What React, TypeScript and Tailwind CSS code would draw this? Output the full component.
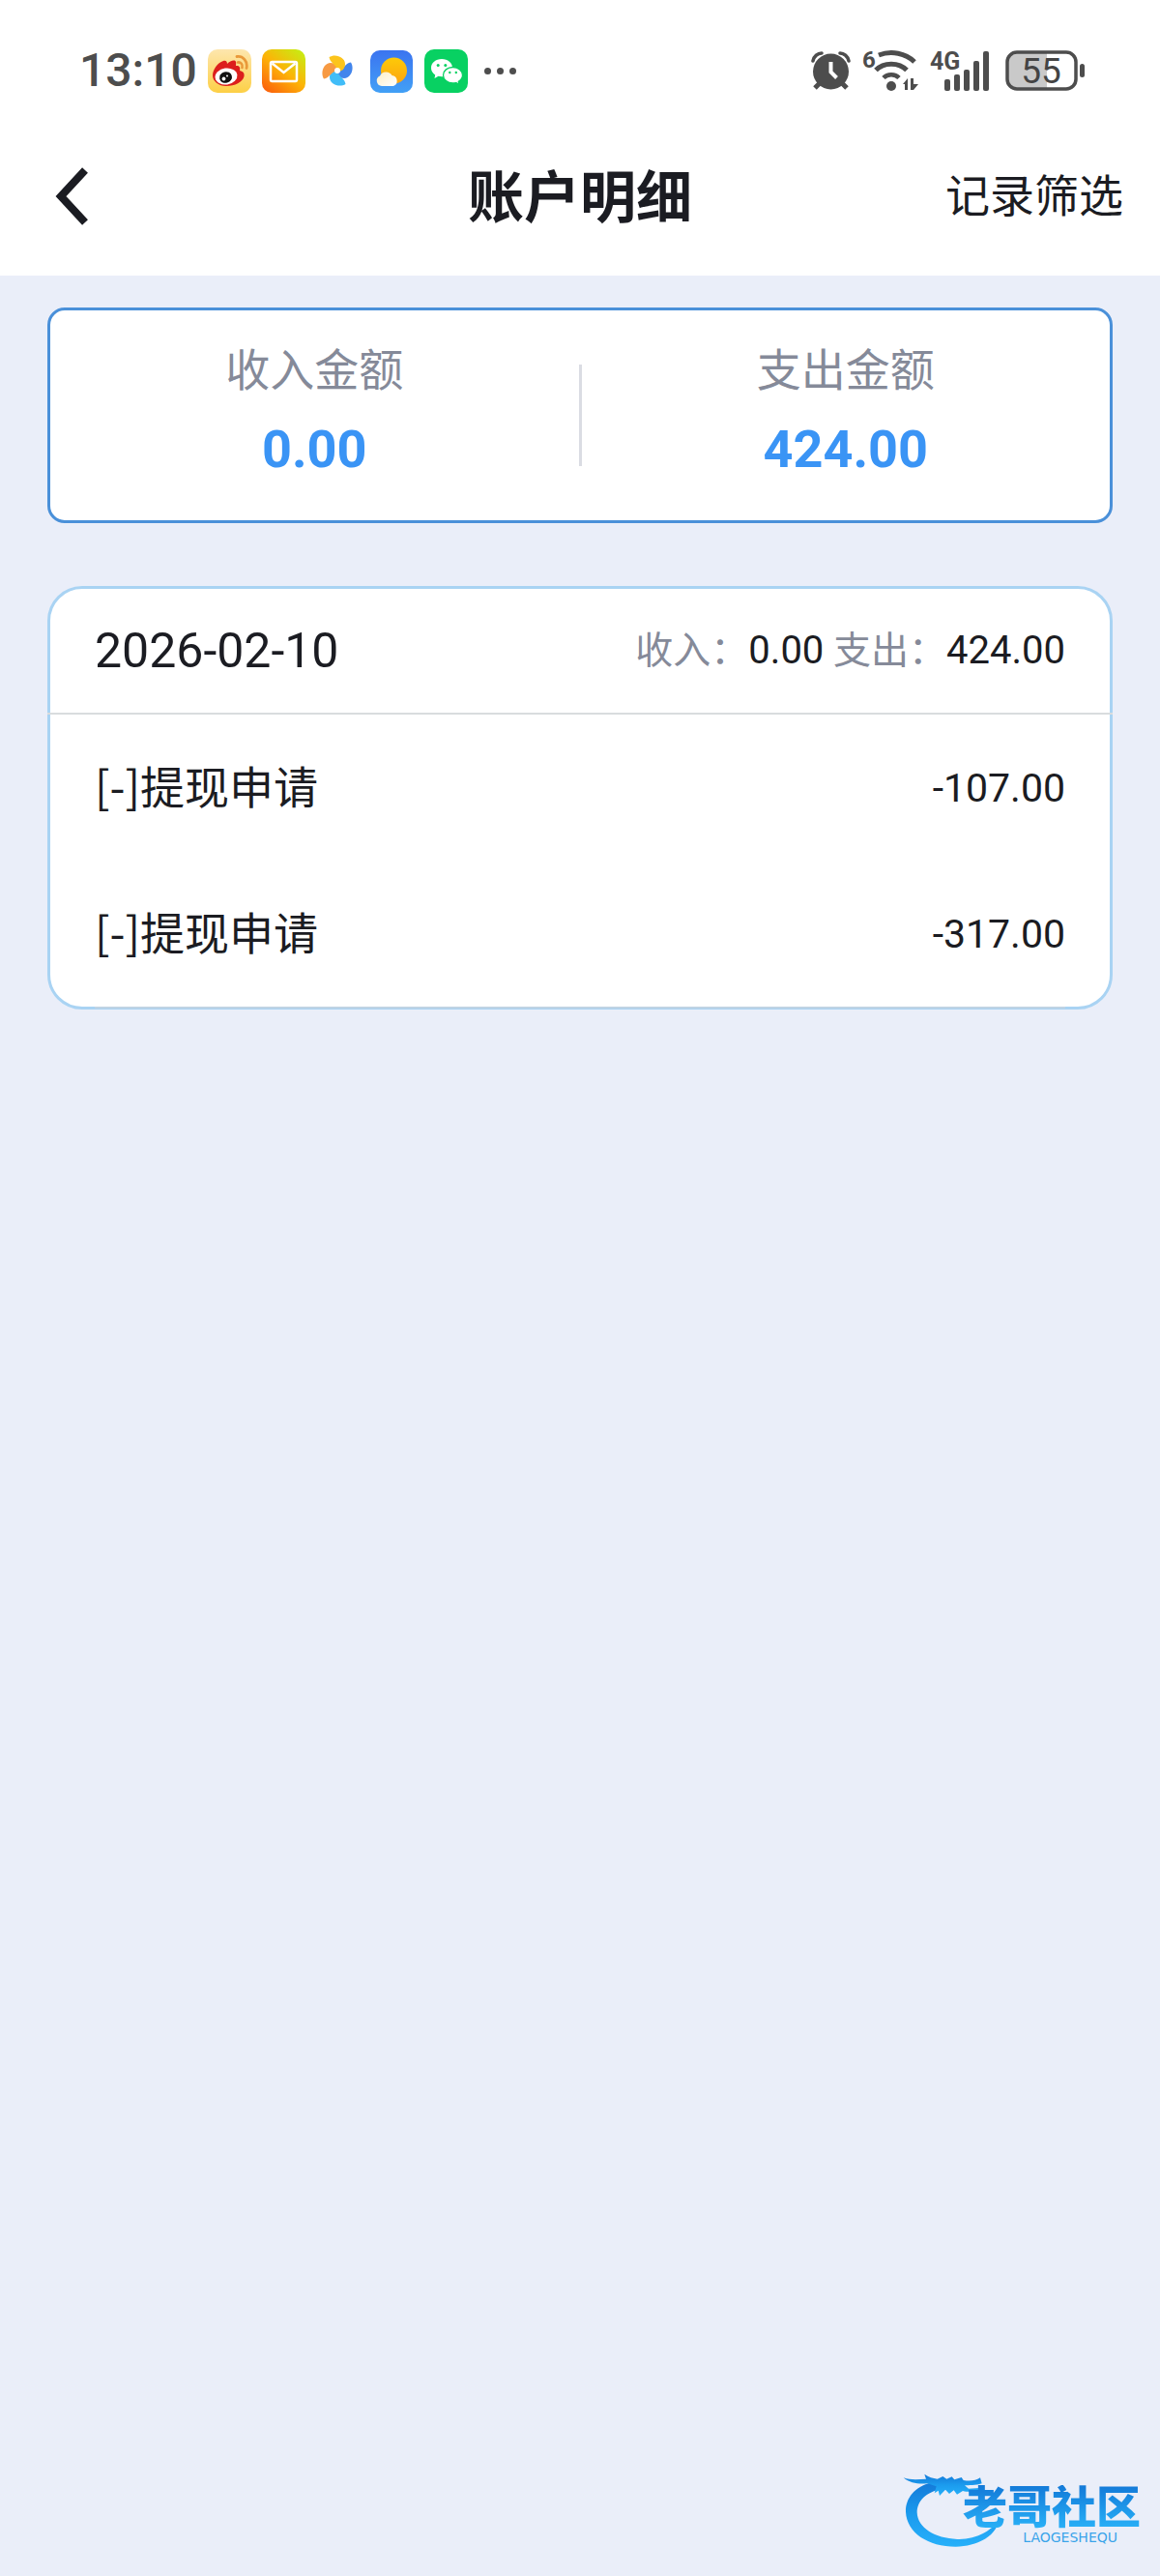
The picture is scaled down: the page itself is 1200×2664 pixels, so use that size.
import React from 'react';

interface RecordItem {
  id: number;
  title: string;
  amount: string;
}

const records: RecordItem[] = [
  { id: 1, title: '[-]提现申请', amount: '-107.00' },
  { id: 2, title: '[-]提现申请', amount: '-317.00' },
];

const WeiboIcon = () => (
  <svg width="45" height="45" viewBox="0 0 45 45" aria-hidden="true">
    <defs>
      <linearGradient id="weibo" x1="0" y1="0" x2="0" y2="1">
        <stop offset="0" stopColor="#fde6ae" />
        <stop offset="1" stopColor="#fdd046" />
      </linearGradient>
    </defs>
    <rect width="45" height="45" rx="10" fill="url(#weibo)" />
    <path d="M5 27C5 21 10 14 16 12c3-1 4 1 4 3 3-3 8-5 9-2 .4 1.5 0 3 0 4 3-.5 5 1 4 5 4 1 5 3 4.5 6C36 34 28 38 19 38 11 38 5 33 5 27z" fill="#dc1f1d" />
    <ellipse cx="19" cy="28" rx="11.5" ry="8.5" fill="#fff" transform="rotate(-8 19 28)" />
    <ellipse cx="18.5" cy="29" rx="6.5" ry="5.8" fill="#111" transform="rotate(-15 18.5 29)" />
    <circle cx="16.5" cy="30.5" r="1.9" fill="#fff" />
    <circle cx="20" cy="27.5" r="1" fill="#fff" />
    <path d="M30 7.5c6-1 11.5 4.5 10 12" fill="none" stroke="#e9993a" strokeWidth="2.8" strokeLinecap="round" />
    <path d="M31 13.5c3-.5 5.5 2 4.5 5.5" fill="none" stroke="#e9993a" strokeWidth="2.6" strokeLinecap="round" />
  </svg>
);

const MailIcon = () => (
  <svg width="45" height="45" viewBox="0 0 45 45" aria-hidden="true">
    <defs>
      <linearGradient id="mail" x1="0.1" y1="1" x2="0.9" y2="0">
        <stop offset="0" stopColor="#fb5f0c" />
        <stop offset="0.5" stopColor="#fdb307" />
        <stop offset="1" stopColor="#c6ee14" />
      </linearGradient>
    </defs>
    <rect width="45" height="45" rx="10" fill="url(#mail)" />
    <rect x="9" y="13" width="27" height="20" rx="1.5" fill="none" stroke="#fff" strokeWidth="2.5" />
    <path d="M10.5 14.5L22.5 24l12-9.5" fill="none" stroke="#fff" strokeWidth="2.5" />
  </svg>
);

const PinwheelIcon = () => (
  <svg width="34" height="34" viewBox="-17 -17 34 34" aria-hidden="true">
    <path d="M-1 0C6 0 8-8 14-8.5C18-2 14 8 7 8C2 8-1 5-1 0Z" fill="#4285ec" />
    <path d="M-1 0C6 0 8-8 14-8.5C18-2 14 8 7 8C2 8-1 5-1 0Z" fill="#41bdf8" transform="rotate(90)" />
    <path d="M-1 0C6 0 8-8 14-8.5C18-2 14 8 7 8C2 8-1 5-1 0Z" fill="#f79a43" transform="rotate(180)" />
    <path d="M-1 0C6 0 8-8 14-8.5C18-2 14 8 7 8C2 8-1 5-1 0Z" fill="#fcc41c" transform="rotate(270)" />
    <circle r="3" fill="#fff" />
  </svg>
);

const WeatherIcon = () => (
  <svg width="45" height="45" viewBox="0 0 45 45" aria-hidden="true">
    <defs>
      <linearGradient id="sky" x1="0" y1="0" x2="0" y2="1">
        <stop offset="0" stopColor="#3b74f0" />
        <stop offset="1" stopColor="#42a0f6" />
      </linearGradient>
      <linearGradient id="sun" x1="0" y1="0" x2="0" y2="1">
        <stop offset="0" stopColor="#fdca08" />
        <stop offset="1" stopColor="#fda50f" />
      </linearGradient>
      <linearGradient id="cloud" x1="0" y1="0" x2="1" y2="1">
        <stop offset="0" stopColor="#fdeec4" />
        <stop offset="1" stopColor="#fff" />
      </linearGradient>
    </defs>
    <rect y="1" width="44" height="44" rx="10" fill="url(#sky)" />
    <circle cx="24.5" cy="22" r="13.5" fill="url(#sun)" />
    <path d="M12 38a5.5 5.5 0 0 1-2-10.5A7 7 0 0 1 22.5 27a5.7 5.7 0 0 1 1.5 11z" fill="url(#cloud)" />
  </svg>
);

const WechatIcon = () => (
  <svg width="45" height="45" viewBox="0 0 45 45" aria-hidden="true">
    <rect width="45" height="45" rx="10" fill="#08d162" />
    <path d="M18 10c-6.3 0-11 4-11 9.2 0 3 1.6 5.5 4.2 7.2L10.5 30l4-2.2c1.1.3 2.3.5 3.5.5 6.3 0 11-4 11-9.1S24.3 10 18 10z" fill="#fff" />
    <path d="M29.5 18.5c-5.6 0-10 3.6-10 8.2s4.4 8.2 10 8.2c1.2 0 2.2-.1 3.2-.4l3.3 1.8-.7-3c2.5-1.5 4.2-3.8 4.2-6.6 0-4.6-4.4-8.2-10-8.2z" fill="#fff" stroke="#08d162" strokeWidth="1.3" />
    <circle cx="14.2" cy="16.5" r="1.5" fill="#08d162" />
    <circle cx="21.8" cy="16.5" r="1.5" fill="#08d162" />
    <circle cx="26.3" cy="24" r="1.2" fill="#08d162" />
    <circle cx="32.8" cy="24" r="1.2" fill="#08d162" />
  </svg>
);

const AlarmIcon = () => (
  <svg width="41" height="42" viewBox="0 0 41 42" aria-hidden="true">
    <circle cx="20.5" cy="22" r="18.5" fill="#4d4d4d" />
    <path d="M2 11C3 6 7 3 11 3M39 11C38 6 34 3 30 3" fill="none" stroke="#4d4d4d" strokeWidth="3.6" strokeLinecap="round" />
    <path d="M9 34l-5 5M32 34l5 5" stroke="#4d4d4d" strokeWidth="5" />
    <path d="M20.5 12v10.5l6 6" fill="none" stroke="#fff" strokeWidth="4" />
  </svg>
);

const WifiIcon = () => (
  <svg width="58" height="54" viewBox="0 -4 58 54" fill="none" stroke="#4d4d4d" aria-hidden="true">
    <text x="0" y="20" fill="#4d4d4d" stroke="none" className="font-[Roboto] text-[24px] font-bold">6</text>
    <path d="M17 7C30 2 45 5 54 14" strokeWidth="5" />
    <path d="M14 22.5C22 14 38 14 46 22.5" strokeWidth="5" />
    <path d="M22 30.5C26 26 34 26 38 30.5" strokeWidth="4.5" />
    <circle cx="30" cy="39" r="5" fill="#4d4d4d" stroke="none" />
    <path d="M42 37l5-6v12h-3v-6zM50 31h3v6h5l-5 6h-3z" fill="#4d4d4d" stroke="none" />
  </svg>
);

const SignalIcon = () => (
  <svg width="62" height="54" viewBox="0 -4 62 54" fill="#4d4d4d" aria-hidden="true">
    <text x="0" y="22" className="font-[Roboto] text-[25px] font-bold">4G</text>
    <rect x="15" y="32" width="6" height="12" rx="2" />
    <rect x="25" y="27" width="6" height="17" rx="2" />
    <rect x="35" y="22" width="6" height="22" rx="2" />
    <rect x="45" y="13" width="6" height="31" rx="2" />
    <rect x="55" y="3" width="6" height="41" rx="2" />
  </svg>
);

const BatteryIcon = () => (
  <svg width="83" height="42" viewBox="0 0 83 42" aria-hidden="true">
    <path d="M43 2H12A10 10 0 0 0 2 12v18a10 10 0 0 0 10 10h31z" fill="#c9c9c9" />
    <rect x="2" y="2" width="71" height="38" rx="10" fill="none" stroke="#4d4d4d" strokeWidth="3.5" />
    <rect x="77" y="14" width="5" height="14" rx="2.5" fill="#4d4d4d" />
    <text x="37" y="34" textAnchor="middle" fill="#444" className="font-[Roboto] text-[37px]">55</text>
  </svg>
);

const StatusBar = () => (
  <div className="flex h-[120px] items-center justify-between pt-[26px] pr-[77px] pl-[82px]">
    <div className="flex items-center gap-[11px]">
      <span className="text-[48px] leading-none font-medium text-[#4d4d4d]">13:10</span>
      <WeiboIcon />
      <MailIcon />
      <span className="flex w-[45px] justify-center"><PinwheelIcon /></span>
      <WeatherIcon />
      <WechatIcon />
      <span className="ml-[6px] flex gap-[6px]">
        <i className="size-[7px] rounded-full bg-[#4d4d4d]" />
        <i className="size-[7px] rounded-full bg-[#4d4d4d]" />
        <i className="size-[7px] rounded-full bg-[#4d4d4d]" />
      </span>
    </div>
    <div className="flex items-center gap-3">
      <AlarmIcon />
      <WifiIcon />
      <SignalIcon />
      <span className="ml-1"><BatteryIcon /></span>
    </div>
  </div>
);

const Summary = ({ label, value }: { label: string; value: string }) => (
  <div className="flex flex-1 flex-col items-center gap-4 pb-3">
    <span className="text-[46px] leading-[66px] text-[#858a99]">{label}</span>
    <span className="text-[54px] leading-[66px] font-bold text-[#3a94f5]">{value}</span>
  </div>
);

const CommunityLogo = () => (
  <div className="absolute right-[20px] bottom-[28px] flex items-end">
    <svg width="104" height="80" viewBox="30 45 312 240" aria-hidden="true">
      <defs>
        <linearGradient id="dragon" x1="0" y1="0" x2="0" y2="1">
          <stop offset="0" stopColor="#1479d8" />
          <stop offset="0.5" stopColor="#1b9bee" />
          <stop offset="1" stopColor="#27b0fa" />
        </linearGradient>
      </defs>
      <path d="M128 78C70 92 44 130 45 170C48 235 115 278 200 278C270 276 325 245 335 195C305 235 255 257 205 255C135 252 82 220 80 172C80 138 105 108 160 98Z" fill="url(#dragon)" />
      <path d="M38 64C60 72 85 69 108 68L103 53C116 63 130 65 143 68L160 60L172 68L188 61L196 70L218 63L224 72C245 76 262 73 276 64L281 82C262 89 240 87 228 88L240 98L274 96L270 111C250 107 236 110 222 105L204 116L194 103L180 114L168 101L150 120L146 104L134 112L140 91L112 82C85 84 58 82 38 64Z" fill="url(#dragon)" />
    </svg>
    <div className="-ml-10 flex flex-col items-end pb-1">
      <span className="bg-linear-to-b from-[#1479d8] to-[#2ab2f8] bg-clip-text text-[46px] leading-[46px] font-black text-transparent">老哥社区</span>
      <span className="mr-6 font-['DejaVu_Sans'] text-[14px] leading-[16px] text-[#3aa4ea]">LAOGESHEQU</span>
    </div>
  </div>
);

export default function App() {
  return (
    <div className="relative min-h-screen bg-[#eaeef9] font-[Roboto,'Noto_Sans_CJK_SC',sans-serif] text-[#1b1c22]">
      <header className="bg-white">
        <StatusBar />
        <div className="grid h-[165px] grid-cols-[1fr_auto_1fr] items-center px-[38px]">
          <button type="button" aria-label="返回" className="justify-self-start pl-4">
            <svg width="38" height="62" viewBox="0 0 38 62" fill="none" aria-hidden="true">
              <path d="M34 4L9 31l25 27" stroke="#1b1c22" strokeWidth="8" />
            </svg>
          </button>
          <h1 className="pt-1 text-[58px] leading-[84px] font-bold">账户明细</h1>
          <button type="button" className="justify-self-end text-[46px] leading-[66px]">记录筛选</button>
        </div>
      </header>

      <main className="px-[49px] pt-[33px]">
        <section className="flex h-[223px] items-center rounded-[18px] border-3 border-[#4a90d9] bg-white">
          <Summary label="收入金额" value="0.00" />
          <div className="h-[105px] w-[3px] bg-[#dadce3]" />
          <Summary label="支出金额" value="424.00" />
        </section>

        <section className="relative mt-[65px] rounded-[36px] border-3 border-[#a9d3f3] bg-white">
          <div className="-mx-[3px] flex h-[130px] items-center justify-between border-b-2 border-[#d9dcde] px-[49px]">
            <h2 className="text-[50px] leading-[66px]">2026-02-10</h2>
            <p className="text-[39px] leading-[60px] text-[#858a99]">
              收入：<span className="text-[40px] text-[#1b1c22]">0.00</span> 支出：<span className="text-[40px] text-[#1b1c22]">424.00</span>
            </p>
          </div>
          <ul>
            {records.map(item => (
              <li key={item.id} className="flex h-[151px] items-center justify-between px-[46px]">
                <span className="pb-2 font-['Noto_Sans_CJK_SC',sans-serif] text-[46px] leading-[66px]">{item.title}</span>
                <span className="text-[41px] leading-[60px]">{item.amount}</span>
              </li>
            ))}
          </ul>
          <div className="absolute inset-x-[46px] -bottom-[2px] h-[2px] bg-[#bfd3e4]" />
        </section>
      </main>

      <CommunityLogo />
    </div>
  );
}
